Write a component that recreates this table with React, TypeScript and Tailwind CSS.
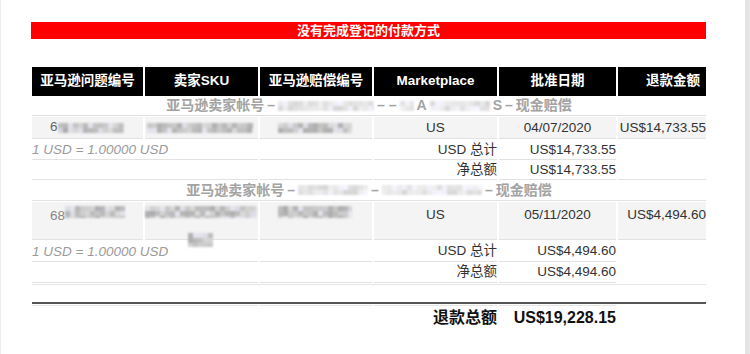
import React from "react";

function Mosaic({ w, h, cell = 5, seed, light = false }: { w: number; h: number; cell?: number; seed: number; light?: boolean }) {
  const cols = Math.ceil(w / cell);
  const rows = Math.ceil(h / cell);
  const cells: string[] = [];
  let s = seed;
  for (let i = 0; i < rows * cols; i++) {
    s = (s * 9301 + 49297) % 233280;
    const r = s / 233280;
    const g = light ? 214 + Math.floor(r * 32) : 172 + Math.floor(r * 58);
    const b = r > 0.82 ? g + 10 : g;
    cells.push(`rgb(${g},${g},${b})`);
  }
  return (
    <div
      className="inline-grid shrink-0 blur-[1px]"
      style={{ gridTemplateColumns: `repeat(${cols}, ${cell}px)`, gridAutoRows: `${cell}px`, width: w, height: h, overflow: "hidden" }}
    >
      {cells.map((c, i) => (
        <div key={i} style={{ background: c }} />
      ))}
    </div>
  );
}

const line = "border-b border-[#e2e2e2]";

export default function App() {
  return (
    <div className="w-[750px] h-[354px] bg-white overflow-hidden flex font-['Liberation_Sans','Noto_Sans_CJK_SC',sans-serif]">
      <div className="flex-1 border-l border-[#ececec] pl-[30px] pt-[22px]">
        <div className="w-[675px] h-[17px] bg-[#ff0000] text-white font-bold text-[13px] leading-[17px] text-center">
          没有完成登记的付款方式
        </div>

        <div className="ml-[1px] mt-[28px] w-[674px] grid grid-cols-[111px_113px_112px_123px_117px_88px] gap-x-[2px] text-[13.5px] text-[#333]">
          {/* header */}
          <div className="h-[29px] bg-black text-white font-bold text-[13.5px] flex items-center justify-center">亚马逊问题编号</div>
          <div className="h-[29px] bg-black text-white font-bold text-[13.5px] flex items-center justify-center">卖家SKU</div>
          <div className="h-[29px] bg-black text-white font-bold text-[13.5px] flex items-center justify-center">亚马逊赔偿编号</div>
          <div className="h-[29px] bg-black text-white font-bold text-[13.5px] flex items-center justify-center">Marketplace</div>
          <div className="h-[29px] bg-black text-white font-bold text-[13.5px] flex items-center justify-center">批准日期</div>
          <div className="h-[29px] bg-black text-white font-bold text-[13.5px] flex items-center justify-end pr-[6px]">退款金额</div>

          {/* group 1 header */}
          <div className={`col-span-6 h-[20px] mb-[1px] flex items-center justify-center gap-[3px] text-[#a3a3a3] font-bold text-[14px] ${line}`}>
            <span>亚马逊卖家帐号</span>
            <span>–</span>
            <Mosaic w={96} h={10} seed={11} light />
            <span>– –</span>
            <Mosaic w={14} h={10} seed={5} light />
            <span>A</span>
            <Mosaic w={60} h={10} seed={23} light />
            <span>S</span>
            <span>–</span>
            <span>现金赔偿</span>
          </div>

          {/* data row 1 */}
          <div className={`h-[22px] bg-[#f4f4f4] flex items-center pl-[18px] ${line}`}>
            <span className="text-[#666]">6</span>
            <Mosaic w={66} h={10} seed={3} />
          </div>
          <div className={`h-[22px] bg-[#f4f4f4] flex items-center pl-[2px] ${line}`}>
            <Mosaic w={106} h={10} seed={7} />
          </div>
          <div className={`h-[22px] bg-[#f4f4f4] flex items-center pl-[18px] ${line}`}>
            <Mosaic w={74} h={10} seed={13} />
          </div>
          <div className={`h-[22px] bg-[#f4f4f4] flex items-center justify-center pt-[1px] ${line}`}>US</div>
          <div className={`h-[22px] bg-[#f4f4f4] flex items-center justify-center pt-[1px] ${line}`}>04/07/2020</div>
          <div className={`h-[22px] bg-[#f4f4f4] flex items-center justify-end pt-[1px] ${line}`}>US$14,733.55</div>

          {/* exchange row 1 */}
          <div className={`col-span-2 h-[20px] mt-[1px] flex items-center pt-[2px] italic text-[#9a9a9a] text-[13.5px] ${line}`}>1 USD = 1.00000 USD</div>
          <div className={`h-[20px] mt-[1px] ${line}`} />
          <div className={`h-[20px] mt-[1px] flex items-center justify-end pt-[1px] ${line}`}>USD 总计</div>
          <div className={`h-[20px] mt-[1px] flex items-center justify-end pt-[1px] ${line}`}>US$14,733.55</div>
          <div className="h-[20px] mt-[1px]" />

          {/* net row 1 */}
          <div className={`col-span-2 h-[20px] ${line}`} />
          <div className={`h-[20px] ${line}`} />
          <div className={`h-[20px] flex items-center justify-end pt-[1px] ${line}`}>净总额</div>
          <div className={`h-[20px] flex items-center justify-end pt-[1px] ${line}`}>US$14,733.55</div>
          <div className={`h-[20px] ${line}`} />

          {/* group 2 header */}
          <div className={`col-span-6 h-[21px] mb-[1px] flex items-center justify-center gap-[3px] text-[#a3a3a3] font-bold text-[14px] ${line}`}>
            <span>亚马逊卖家帐号</span>
            <span>–</span>
            <Mosaic w={70} h={10} seed={31} light />
            <span>–</span>
            <Mosaic w={100} h={10} seed={37} light />
            <span>–</span>
            <span>现金赔偿</span>
          </div>

          {/* data row 2 */}
          <div className={`h-[38px] bg-[#f4f4f4] flex items-start pt-[4px] pl-[18px] ${line}`}>
            <span className="text-[#888]">68</span>
            <Mosaic w={60} h={12} seed={41} />
          </div>
          <div className={`h-[38px] bg-[#f4f4f4] flex flex-col items-start pt-[4px] pl-[0px] ${line}`}>
            <Mosaic w={112} h={12} seed={43} />
            <div className="pl-[43px] mt-[6px]">
              <Mosaic w={25} h={14} seed={47} />
            </div>
          </div>
          <div className={`h-[38px] bg-[#f4f4f4] flex items-start pt-[4px] pl-[18px] ${line}`}>
            <Mosaic w={74} h={12} seed={53} />
          </div>
          <div className={`h-[38px] bg-[#f4f4f4] flex justify-center pt-[3px] ${line}`}>US</div>
          <div className={`h-[38px] bg-[#f4f4f4] flex justify-center pt-[3px] ${line}`}>05/11/2020</div>
          <div className={`h-[38px] bg-[#f4f4f4] flex justify-end pt-[3px] ${line}`}>US$4,494.60</div>

          {/* exchange row 2 */}
          <div className={`col-span-2 h-[21px] mt-[1px] flex items-center pt-[2px] italic text-[#9a9a9a] text-[13.5px] ${line}`}>1 USD = 1.00000 USD</div>
          <div className={`h-[21px] mt-[1px] ${line}`} />
          <div className={`h-[21px] mt-[1px] flex items-center justify-end pt-[1px] ${line}`}>USD 总计</div>
          <div className={`h-[21px] mt-[1px] flex items-center justify-end pt-[1px] ${line}`}>US$4,494.60</div>
          <div className="h-[21px] mt-[1px]" />

          {/* net row 2 */}
          <div className={`col-span-2 h-[21px] ${line}`} />
          <div className={`h-[21px] ${line}`} />
          <div className={`h-[21px] flex items-center justify-end pt-[1px] ${line}`}>净总额</div>
          <div className={`h-[21px] flex items-center justify-end pt-[1px] ${line}`}>US$4,494.60</div>
          <div className="h-[21px]" />

          {/* spacer */}
          <div className="col-span-6 h-[18px] mt-[1px] border-t border-[#e6e6e6]" />
          <div className="col-span-6 h-[2px] bg-[#555]" />

          {/* total row */}
          <div className="col-span-2 h-[24px] mt-[1px] border-t border-[#e6e6e6]" />
          <div className="h-[24px] mt-[1px] border-t border-[#e6e6e6]" />
          <div className="h-[24px] mt-[1px] border-t border-[#e6e6e6] flex items-center justify-end pt-[1px] font-bold text-[16px] text-[#111]">退款总额</div>
          <div className="h-[24px] mt-[1px] border-t border-[#e6e6e6] flex items-center justify-end pt-[1px] font-bold text-[16px] text-[#111]">US$19,228.15</div>
          <div className="h-[24px] mt-[1px]" />
        </div>
      </div>
      <div className="w-[5px] h-full bg-[#e4e4e4]" />
    </div>
  );
}
